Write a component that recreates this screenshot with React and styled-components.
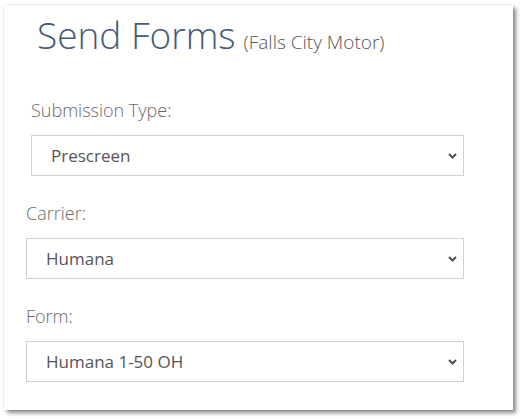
import React from "react";
import styled, { createGlobalStyle } from "styled-components";

const Global = createGlobalStyle`
  html, body { margin: 0; padding: 0; background: #ffffff; }
  body { font-family: "Open Sans", "Liberation Sans", sans-serif; }
  * { box-sizing: border-box; }
`;

const Page = styled.div`
  padding: 5px 0 0 4px;
  height: 419px;
`;

const Card = styled.div`
  width: 509px;
  height: 405px;
  background: #ffffff;
  padding: 8px 49px 0 22px;
  box-shadow: 3px 3px 4px rgba(0, 0, 0, 0.45), 0 0 2px rgba(0, 0, 0, 0.15);
  display: flex;
  flex-direction: column;
`;

const Title = styled.h1`
  margin: 0 0 0 11px;
  font-size: 37px;
  line-height: 44px;
  height: 44px;
  font-weight: 300;
  color: #445a7a;
  white-space: nowrap;
`;

const Sub = styled.small`
  font-size: 19px;
  line-height: 20px;
  font-weight: 300;
  color: #555555;
  margin-left: 8px;
`;

const Field = styled.div`
  display: flex;
  flex-direction: column;
  margin-top: ${(p) => p.$top}px;
  margin-left: ${(p) => p.$indent || 0}px;
`;

const Label = styled.label`
  font-size: 18px;
  line-height: 24px;
  font-weight: 300;
  color: #6a6a6a;
  margin-bottom: 13px;
`;

const SelectWrap = styled.div`
  position: relative;
  width: 100%;
`;

const Select = styled.select`
  appearance: none;
  -webkit-appearance: none;
  width: 100%;
  height: 41px;
  border: 1px solid #ccd2d9;
  border-radius: 0;
  background: #ffffff;
  padding: 0 30px 0 19px;
  margin: 0;
  font-family: "Open Sans", "Liberation Sans", sans-serif;
  font-size: 17px;
  font-weight: 400;
  color: #555555;
  outline: none;
`;

const Chevron = styled.svg`
  position: absolute;
  right: 7px;
  top: 50%;
  margin-top: -3px;
  width: 9px;
  height: 6px;
  pointer-events: none;
`;

function Dropdown({ value, options }) {
  return (
    <SelectWrap>
      <Select defaultValue={value}>
        {options.map((o) => (
          <option key={o} value={o}>
            {o}
          </option>
        ))}
      </Select>
      <Chevron viewBox="0 0 9 6">
        <path d="M1 1 L4.5 4.5 L8 1" fill="none" stroke="#4a4d52" strokeWidth="2" />
      </Chevron>
    </SelectWrap>
  );
}

export default function App() {
  return (
    <>
      <Global />
      <Page>
        <Card>
          <Title>
            Send Forms<Sub>(Falls City Motor)</Sub>
          </Title>
          <Field $top={41} $indent={5}>
            <Label>Submission Type:</Label>
            <Dropdown value="Prescreen" options={["Prescreen", "Application"]} />
          </Field>
          <Field $top={25}>
            <Label>Carrier:</Label>
            <Dropdown value="Humana" options={["Humana", "Aetna"]} />
          </Field>
          <Field $top={25}>
            <Label>Form:</Label>
            <Dropdown value="Humana 1-50 OH" options={["Humana 1-50 OH"]} />
          </Field>
        </Card>
      </Page>
    </>
  );
}
